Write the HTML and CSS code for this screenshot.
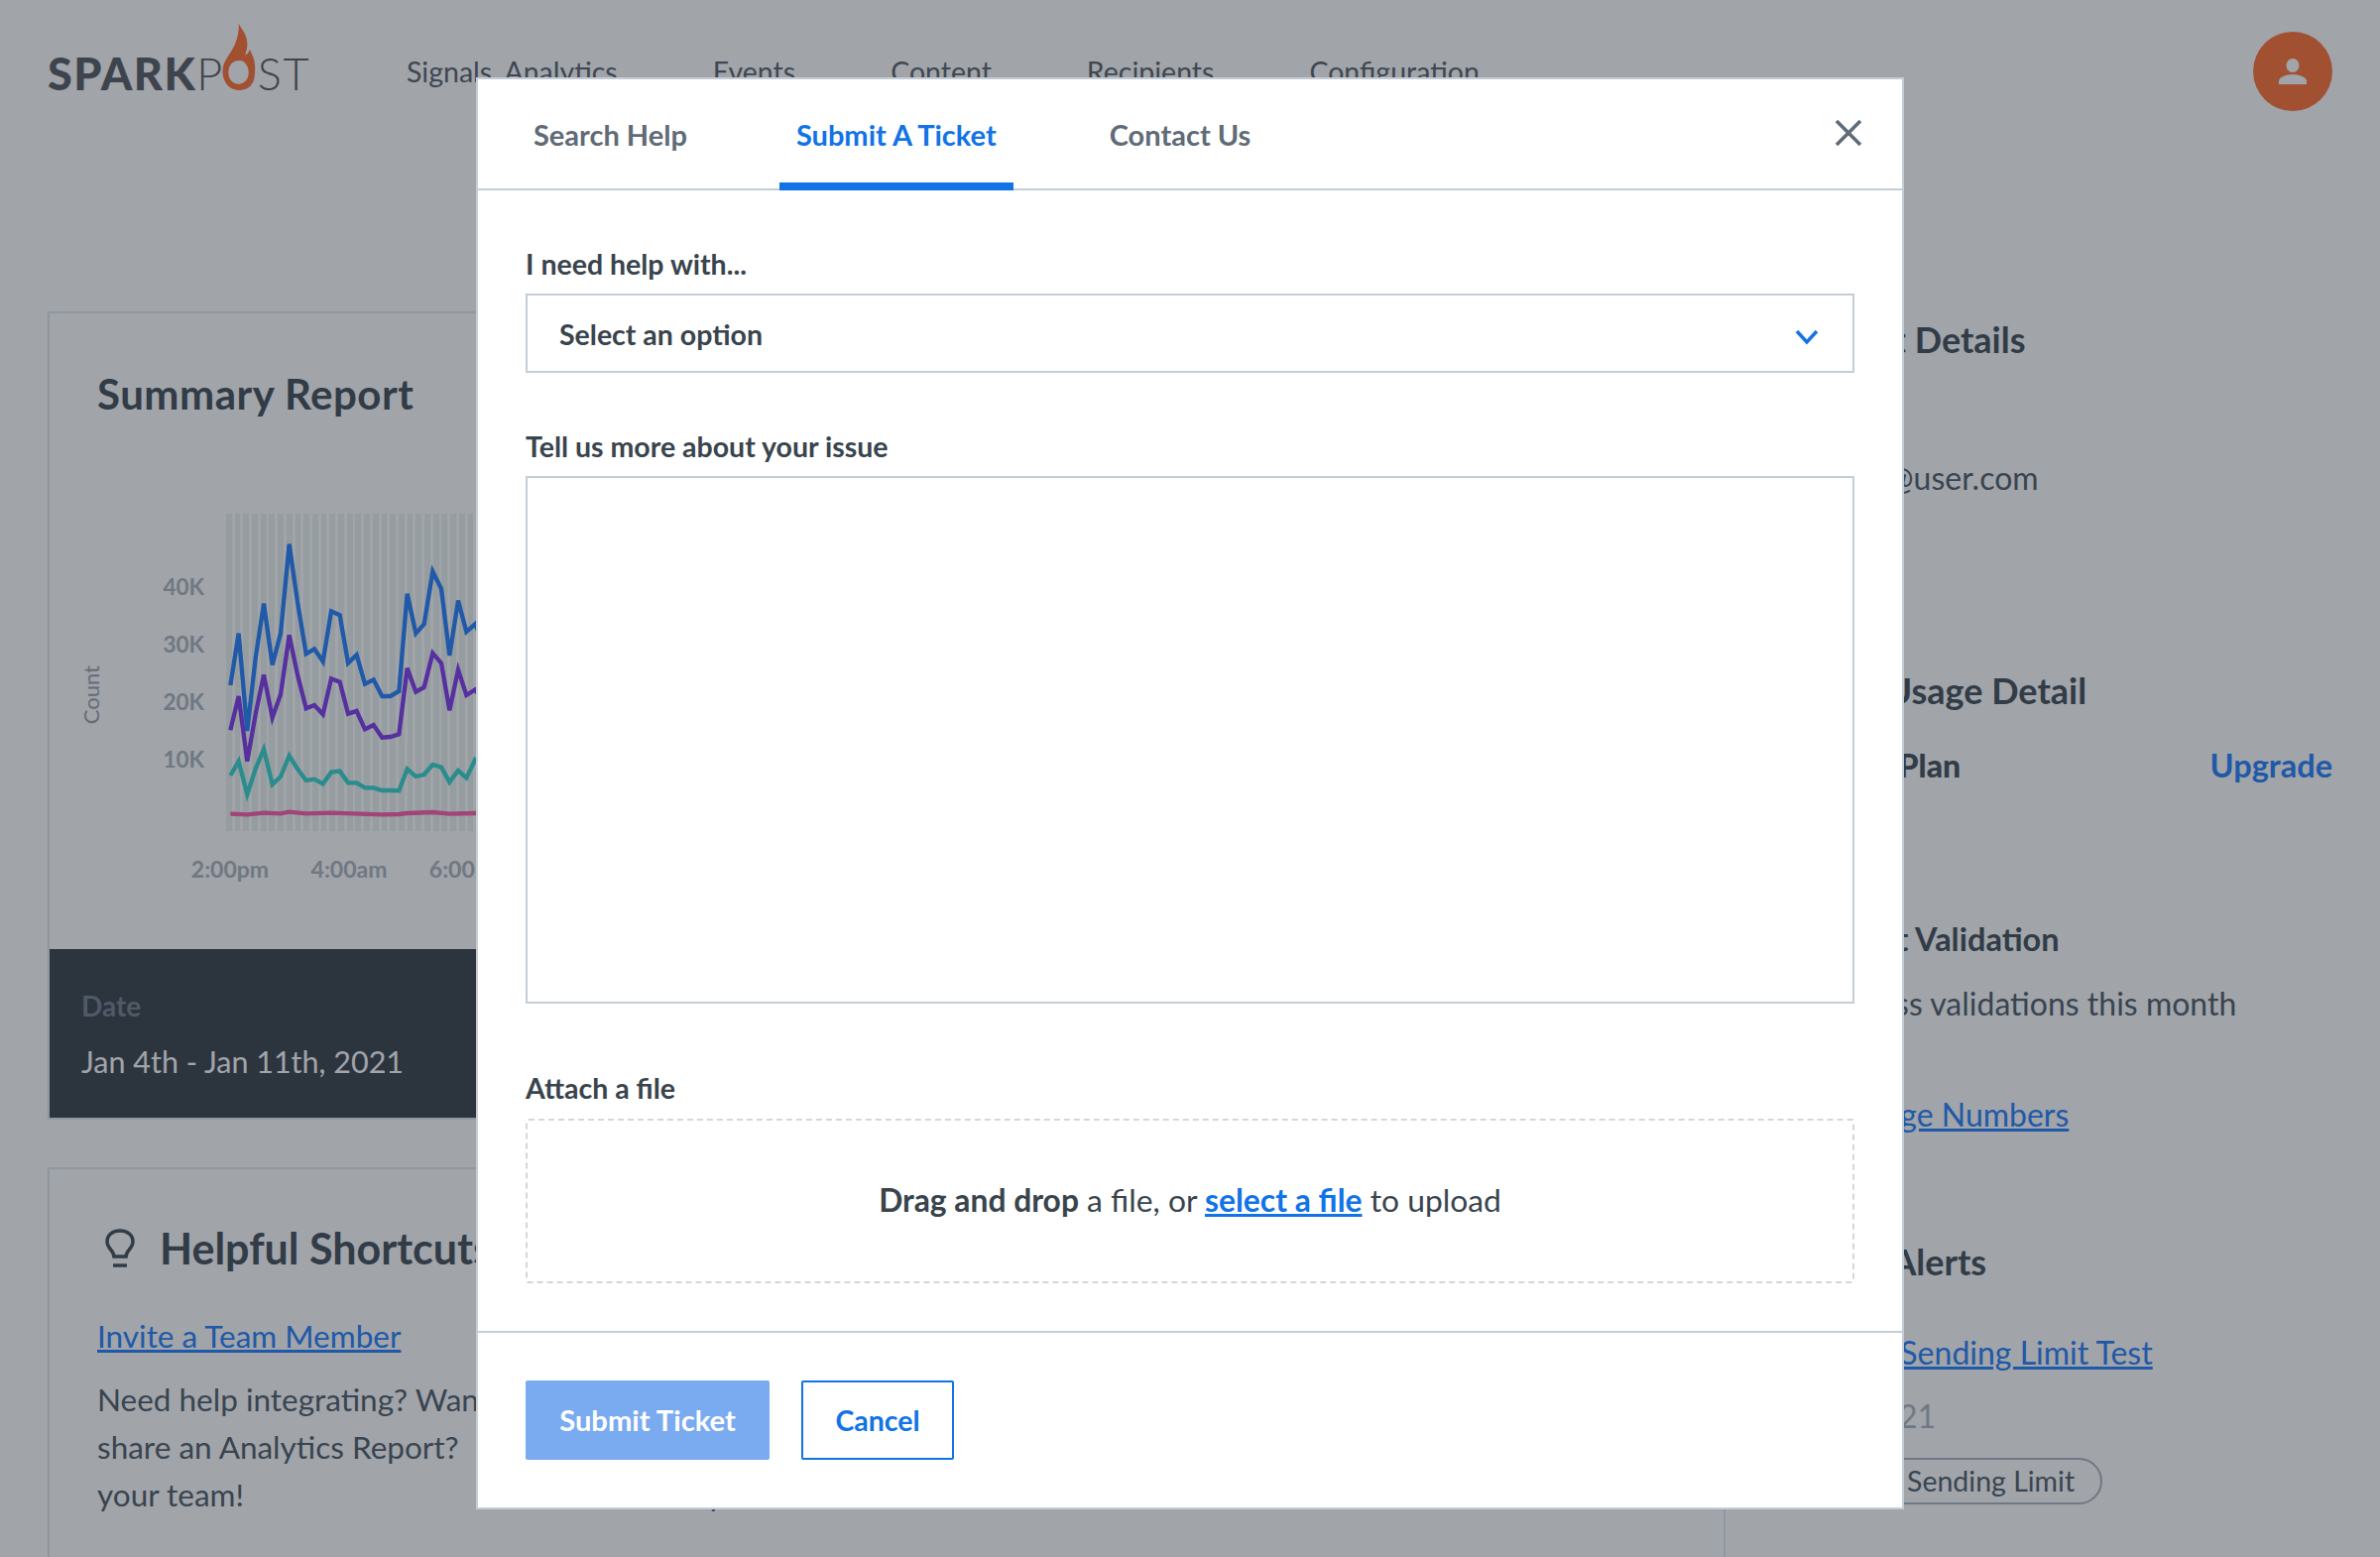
FILE: index.html
```html
<!DOCTYPE html>
<html lang="en">
<head>
<meta charset="utf-8">
<title>SparkPost</title>
<link rel="stylesheet" href="styles.css">
</head>
<body>
<div class="page">
  <header class="topbar">
    <div class="logo" aria-label="SparkPost">
      <span class="logo-bold">SPARK</span><span class="logo-light">P</span><span class="logo-o">O<svg class="flame" viewBox="0 0 36 70"><path fill-rule="evenodd" d="M17 0C20 6 27 12 26 24C25.5 28 24.5 31 24 33C26 32 28 30 28.5 27C32 33 35 41 34 50C33 62 26 69 17 69C8 69 1 62 .5 51C0 38 9 33 14 20C16 14 18 7 17 0ZM17 38C11 38 6.500 44 6.500 51C6.500 58 11 63 17 63C23 63 27.500 58 27.500 51C27.500 44 23 38 17 38Z"/></svg></span><span class="logo-light">ST</span>
    </div>
    <nav class="nav">
      <span>Signals Analytics</span><span>Events</span><span>Content</span><span>Recipients</span><span>Configuration</span>
    </nav>
    <div class="avatar">
      <svg viewBox="0 0 28 26" class="avatar-icon"><ellipse cx="14" cy="7" rx="6.500" ry="7"/><path d="M0 26V23C0 19 7 16 14 16C21 16 28 19 28 23V26Z"/></svg>
    </div>
  </header>
  <main class="content">
    <div class="col-left">
      <section class="card">
        <h2 class="card-title">Summary Report</h2>
        <div class="chart">
          <div class="count-wrap"><span class="count">Count</span></div>
          <div class="yaxis"><span>40K</span><span>30K</span><span>20K</span><span>10K</span></div>
          <div class="plot-wrap">
            <svg class="plot" viewBox="684 113 900 960">
              <polyline class="ln blue" points="697,632 722,475 748,770 773,550 798,385 824,570 849,475 875,205 900,380 926,537 951,522 977,560 1002,408 1028,420 1053,565 1079,540 1104,628 1130,615 1156,665 1181,665 1207,650 1232,355 1258,475 1283,447 1309,288 1335,340 1360,542 1386,376 1411,470 1437,447 1462,500"/>
              <polyline class="ln purple" points="697,768 722,665 748,862 773,720 798,600 824,730 849,660 875,480 900,600 926,702 951,692 977,720 1002,612 1028,622 1053,718 1079,710 1104,765 1130,752 1156,790 1181,788 1207,780 1232,580 1258,652 1283,638 1309,535 1335,565 1360,708 1386,585 1411,662 1437,645 1462,680"/>
              <polyline class="ln teal" points="697,905 722,862 748,962 773,885 798,825 824,932 849,908 875,845 900,885 926,920 951,916 977,930 1002,895 1028,892 1053,927 1079,927 1104,942 1130,942 1156,950 1181,950 1207,951 1232,885 1258,908 1283,902 1309,872 1335,880 1360,925 1386,890 1411,912 1437,858 1462,880"/>
              <polyline class="ln pink" points="697,1021 748,1023 798,1018 849,1020 875,1015 926,1020 1002,1018 1156,1023 1207,1022 1232,1019 1309,1016 1360,1021 1437,1019 1462,1019"/>
            </svg>
            <div class="xaxis"><span>2:00pm</span><span>4:00am</span><span>6:00pm</span></div>
          </div>
        </div>
        <div class="date-panel">
          <div class="date-label">Date</div>
          <div class="date-value">Jan 4th - Jan 11th, 2021</div>
        </div>
      </section>
      <section class="card card-tips">
        <h2 class="tips-title">
          <svg class="bulb" viewBox="0 0 32 40"><path d="M10 28C10 22 3 20 3 13C3 6 9 2 16 2C23 2 29 6 29 13C29 20 22 22 22 28Z"/><path d="M9 37H23"/></svg>
          Helpful Shortcuts
        </h2>
        <div class="tips-grid">
          <div class="tip">
            <a class="link">Invite a Team Member</a>
            <p>Need help integrating? Want to<br>share an Analytics Report?&nbsp;&nbsp;Invite<br>your team!</p>
          </div>
          <div class="tip">
            <a class="link">Learn More</a>
            <p>See reports<br>with views.<br>Try</p>
          </div>
        </div>
      </section>
    </div>
    <aside class="col-right">
      <h3 class="side-h side-account">Account Details</h3>
      <p class="side-p side-email">testuser@user.com</p>
      <h3 class="side-h side-usage">Plan Usage Detail</h3>
      <div class="side-row"><strong class="side-plan">Current Plan</strong><a class="upgrade">Upgrade</a></div>
      <h3 class="side-h side-valid">Recipient Validation</h3>
      <p class="side-p side-month">Address validations this month</p>
      <p class="side-p side-numbers"><a class="link">View Usage Numbers</a></p>
      <h3 class="side-h side-alerts">Recent Alerts</h3>
      <p class="side-p side-test"><a class="link">Alert Sending Limit Test</a></p>
      <p class="side-date">Jan 5, 2021</p>
      <span class="pill">Sending Limit</span>
    </aside>
  </main>

  <div class="overlay">
    <div class="modal">
      <div class="tabs">
        <span class="tab">Search Help</span>
        <span class="tab active">Submit A Ticket</span>
        <span class="tab">Contact Us</span>
        <svg class="close" viewBox="0 0 28 28"><path d="M2 2L26 26M26 2L2 26"/></svg>
      </div>
      <div class="modal-body">
        <label class="label">I need help with...</label>
        <div class="select">
          <span>Select an option</span>
          <svg class="chevron" viewBox="0 0 24 16"><path d="M2 2L12 13L22 2"/></svg>
        </div>
        <label class="label label-gap">Tell us more about your issue</label>
        <div class="textarea"></div>
        <label class="label label-gap-lg">Attach a file</label>
        <div class="drop">
          <span><b>Drag and drop</b> a file, or <a class="file-link">select a file</a> to upload</span>
        </div>
      </div>
      <div class="modal-foot">
        <button class="btn btn-primary">Submit Ticket</button>
        <button class="btn btn-outline">Cancel</button>
      </div>
    </div>
  </div>
</div>
</body>
</html>
```

FILE: styles.css
```css
* { box-sizing: border-box; }
html, body { margin: 0; padding: 0; }
body { font-family: "Lato", "Liberation Sans", sans-serif; background: #fff; color: #535f6c; }
.page { position: relative; width: 2400px; height: 1570px; overflow: hidden; background: #fff; }

.topbar { display: flex; align-items: flex-start; height: 144px; padding: 0 48px; }
.logo { display: flex; align-items: baseline; margin-top: 47px; width: 362px; font-size: 45px; line-height: 54px; color: #5a5f66; }
.logo-bold { font-weight: 900; letter-spacing: 1.500px; }
.logo-light { font-weight: 300; letter-spacing: 1.500px; }
.logo-o { position: relative; width: 35px; color: #ff763a; font-weight: 300; text-align: center; margin: 0 1px 0 -2px; }
.flame { position: absolute; left: 0; bottom: 9px; width: 35px; height: 69px; fill: #ff763a; }
.nav { display: flex; gap: 96px; margin-top: 54px; font-size: 28.500px; word-spacing: 6px; line-height: 36px; color: #5a656e; }
.avatar { margin-left: auto; margin-top: 32px; width: 80px; height: 80px; border-radius: 50%; background: #ff763a; display: flex; align-items: center; justify-content: center; }
.avatar-icon { width: 28px; height: 26px; fill: #fff; }

.content { display: grid; grid-template-columns: 1692px 1fr; padding: 170px 48px 0; }
.col-left { display: flex; flex-direction: column; gap: 48px; }
.card { border: 2px solid #e1ebf3; }
.card-title { margin: 0; padding: 57px 48px 0; font-size: 42px; letter-spacing: .5px; line-height: 49px; font-weight: 700; color: #46525c; }
.chart { display: flex; margin-top: 96px; }
.count-wrap { width: 84px; height: 320px; padding: 153px 0 0 30px; }
.count { display: block; writing-mode: vertical-rl; transform: rotate(180deg); font-size: 22px; line-height: 24px; color: #9aa4ae; width: 24px; white-space: nowrap; }
.yaxis { display: flex; flex-direction: column; width: 72px; padding-top: 45px; text-align: right; font-size: 22.500px; line-height: 58px; font-weight: 700; color: #acb6c0; }
.plot-wrap { margin-left: 22px; }
.plot { display: block; width: 300px; height: 320px; background: repeating-linear-gradient(90deg, #ebf3f2 0, #ebf3f2 5.700px, #fff 5.700px, #fff 8.700px); }
.ln { fill: none; stroke-width: 13; stroke-linejoin: miter; }
.blue { stroke: #2882fd; }
.purple { stroke: #823eee; }
.teal { stroke: #39d7cf; }
.pink { stroke: #ff5faa; }
.xaxis { display: flex; gap: 40px; margin: 22px 0 0 -36px; font-size: 23px; line-height: 32px; font-weight: 700; color: #acb6c0; }
.xaxis span { width: 80px; text-align: center; white-space: nowrap; }
.date-panel { margin-top: 65px; height: 170px; padding: 41px 32px 0; background: #3c454e; }
.date-label { font-size: 28px; line-height: 32px; font-weight: 700; color: #77848f; }
.date-value { margin-top: 20px; font-size: 30.500px; line-height: 40px; color: #fff; }

.card-tips { height: 600px; padding: 54px 48px 0; }
.tips-title { display: flex; align-items: center; gap: 24px; margin: 0; font-size: 43px; line-height: 52px; font-weight: 700; color: #46525c; padding-left: 7px; white-space: nowrap; }
.bulb { width: 32px; height: 40px; fill: none; stroke: #46525c; stroke-width: 3.500; }
.tips-grid { display: grid; grid-template-columns: 500px 500px; gap: 89px; margin-top: 38px; }
.link { color: #2882fd; text-decoration: underline; }
.tip { font-size: 31.500px; line-height: 48px; }
.tip p { margin: 16px 0 0; }

.col-right { padding-left: 49px; }
.side-h { margin: 0; font-weight: 700; color: #46525c; white-space: nowrap; }
.side-p { margin: 0; font-size: 32px; line-height: 40px; white-space: nowrap; }
.side-account { font-size: 36px; line-height: 44px; margin-top: 6px; }
.side-email { margin-top: 98px; }
.side-usage { font-size: 36px; line-height: 44px; margin-top: 172px; margin-left: 34px; }
.side-row { display: flex; justify-content: space-between; margin-top: 34px; font-size: 32px; line-height: 40px; font-weight: 700; color: #46525c; }
.side-plan { margin-left: 8px; }
.upgrade { color: #2882fd; font-size: 32.500px; }
.side-valid { font-size: 32.500px; line-height: 40px; margin-top: 135px; }
.side-month { margin-top: 25px; margin-left: 37px; }
.side-numbers { margin-top: 72px; margin-left: -4px; }
.side-alerts { font-size: 36px; line-height: 44px; margin-top: 106px; }
.side-test { margin-top: 50px; margin-left: 50px; }
.side-date { margin: 24px 0 0; font-size: 32px; line-height: 40px; color: #acb6c0; }
.pill { display: inline-block; margin: 22px 0 0 59px; height: 47px; padding: 0 26px 0 73px; border: 2px solid #acb6c0; border-radius: 24px; font-size: 28.500px; line-height: 43px; white-space: nowrap; }

.overlay { position: absolute; inset: 0; display: flex; justify-content: center; padding-top: 78px; background: rgba(20, 28, 40, .4); }
.modal { width: 1440px; height: 1444px; background: #fff; border: 2px solid #c5ced6; display: flex; flex-direction: column; }
.tabs { position: relative; display: flex; align-items: flex-start; height: 112px; padding-left: 39px; border-bottom: 2px solid #c5ced6; flex: none; }
.tab { height: 112px; padding: 38px 17px 0; margin-right: 78px; border-bottom: 8px solid transparent; font-size: 29px; line-height: 36px; font-weight: 700; color: #5f6b77; white-space: nowrap; }
.tab.active { margin-left: -2px; margin-right: 80px; color: #1273e6; border-bottom-color: #1273e6; }
.close { width: 28px; height: 28px; margin-left: auto; margin-top: 40px; margin-right: 40px; fill: none; stroke: #5f6b77; stroke-width: 3.600; }
.modal-body { flex: 1; padding: 58px 48px 0; }
.label { display: block; font-size: 28.500px; line-height: 32px; font-weight: 700; color: #39444d; margin-bottom: 14px; }
.label-gap { margin-top: 58px; }
.label-gap-lg { margin-top: 69px; margin-bottom: 15px; }
.select { display: flex; align-items: center; justify-content: space-between; height: 80px; padding: 2px 34px 0 32px; border: 2px solid #c5ced6; font-size: 28.500px; font-weight: 700; color: #39444d; }
.chevron { width: 24px; height: 16px; margin-top: 6px; fill: none; stroke: #1273e6; stroke-width: 3.500; }
.textarea { height: 532px; border: 2px solid #c5ced6; }
.drop { display: flex; align-items: center; justify-content: center; height: 166px; padding-bottom: 2px; border: 2px dashed #d4d6d8; border-radius: 3px; font-size: 31.800px; color: #39444d; }
.drop b { font-weight: 700; }
.file-link { color: #1273e6; font-weight: 700; text-decoration: underline; }
.modal-foot { display: flex; gap: 32px; height: 178px; padding: 48px 48px; border-top: 2px solid #c5ced6; flex: none; }
.btn { font: 700 28.500px/36px "Lato", "Liberation Sans", sans-serif; height: 80px; border-radius: 2px; }
.btn-primary { width: 246px; background: #7aaaf0; border: 0; color: #fff; font-size: 29.200px; }
.btn-outline { width: 154px; background: #fff; border: 2px solid #1273e6; color: #1273e6; }
```
